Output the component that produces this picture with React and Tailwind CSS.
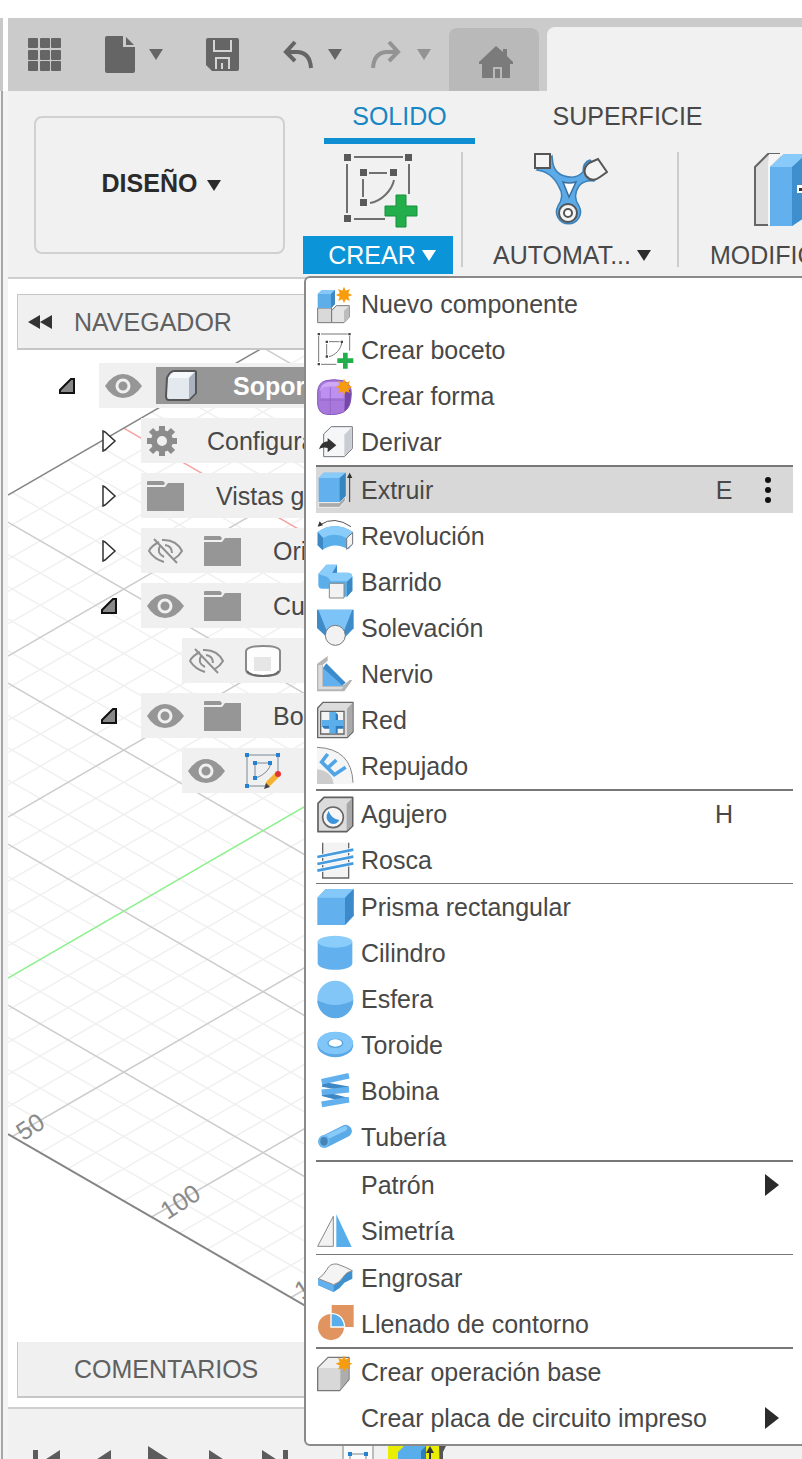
// src/App.jsx
import { useState } from 'react';

// Estrella naranja de los iconos "nuevo"
function Star({ cx, cy, r = 25 }) {
  const points = [];
  for (let i = 0; i < 16; i++) {
    const radius = i % 2 === 0 ? r : r * 0.55;
    const angle = (Math.PI / 8) * i;
    points.push(`${cx + radius * Math.sin(angle)},${cy - radius * Math.cos(angle)}`);
  }
  return <polygon points={points.join(' ')} fill="#f79c0c" />;
}

// Iconos del menu, todos en una caja de 108 x 108
const menuIcons = {
  componente: (
    <>
      <path d="M2 66h42v44H2z" fill="#d9d9d9" stroke="#777" strokeWidth="3" />
      <path d="M44 74l14-15h39v34l-16 17H44z" fill="#e4e4e4" stroke="#777" strokeWidth="3" strokeLinejoin="round" />
      <path d="M81 110V74l16-15v34z" fill="#bcbcbc" />
      <path d="M2 24l13-12h39v42L44 66H2z" fill="#5eaeea" />
      <path d="M2 24l13-12h39L42 24z" fill="#86c8f8" />
      <path d="M42 24l12-12v42L42 66z" fill="#3d87c4" />
      <Star cx={81} cy={27} />
    </>
  ),
  boceto: (
    <>
      <g stroke="#777" strokeWidth="3" fill="none">
        <path d="M12 6h80M5 12v78M98 12v44M12 97h46M36 29h32M29 36v32M74 33c-2 18-18 36-38 41" />
      </g>
      <g fill="#444">
        <path d="M2 3h7v7H2zM94 3h7v7h-7zM2 93h7v7H2zM26 26h7v7h-7zM71 26h7v7h-7zM26 70h7v7h-7z" />
      </g>
      <path d="M78 62h14v17h17v14H92v17H78V93H61V79h17z" fill="#22ae4b" />
    </>
  ),
  forma: (
    <>
      <path d="M2 40Q4 14 26 8Q50 2 78 8Q104 16 103 48Q102 88 80 102Q60 112 28 109Q4 106 2 78z" fill="#a878dd" />
      <path d="M84 44q14-14 18-6v30q-4 24-20 32z" fill="#7548a8" />
      <path d="M8 38Q14 16 34 12h38q-4 8-10 14H34Q16 26 10 38z" fill="#cfa8f6" />
      <path d="M12 34q10-8 22-8h36q8 0 10 10v24H12z" fill="#bd8ff0" />
      <path d="M40 28v78M6 66h74" stroke="#8f64c4" strokeWidth="2.5" fill="none" />
      <path d="M2 40Q4 14 26 8Q50 2 78 8Q104 16 103 48Q102 88 80 102Q60 112 28 109Q4 106 2 78z" fill="none" stroke="#8458bb" strokeWidth="3" />
      <Star cx={81} cy={27} />
    </>
  ),
  derivar: (
    <>
      <path d="M20 30L43 8h63v66L82 98H20z" fill="#f5f6f8" stroke="#70747a" strokeWidth="3" strokeLinejoin="round" />
      <path d="M82 32l22-22v64L82 96z" fill="#c9ccd2" />
      <path d="M6 76Q12 54 32 52V42l26 22-26 21V72Q16 68 6 76z" fill="#333" />
    </>
  ),
  extruir: (
    <>
      <path d="M5 92h62l18-18v12l-18 20H5z" fill="#aaa" stroke="#fff" strokeWidth="2" />
      <path d="M5 18L20 2h66v70L68 90H5z" fill="#62b1ee" />
      <path d="M5 18L20 2h66L68 18z" fill="#88caf9" />
      <path d="M68 18L86 2v70L68 90z" fill="#3684c0" />
      <path d="M98 90V12" stroke="#333" strokeWidth="3" />
      <path d="M98 2l8 16H90z" fill="#333" />
    </>
  ),
  revolucion: (
    <>
      <path d="M2 42Q52 6 108 42v36L94 94Q52 70 16 96L2 82z" fill="#5aaeea" />
      <path d="M2 42Q52 6 108 42L88 60Q52 40 18 60z" fill="#8accfa" />
      <path d="M2 42l16 18v36L2 82z" fill="#3b88c4" />
      <path d="M89 60l18-16v34L89 94z" fill="#f4f4f4" stroke="#777" strokeWidth="3" />
      <path d="M10 20Q52-8 102 26" fill="none" stroke="#555" strokeWidth="3" />
      <path d="M2 26l6-16 10 12z" fill="#333" />
    </>
  ),
  barrido: (
    <>
      <path d="M4 30L28 2h32v24h32q14 0 14 12v42L90 98H40V74H16Q4 74 4 62z" fill="#5aaeea" />
      <path d="M4 30L28 2h32L46 26h46q12 0 14 12L90 52H40Q36 38 22 36z" fill="#8accfa" />
      <path d="M90 54l16-16v42L90 98z" fill="#3b88c4" />
      <path d="M46 26L60 4v22z" fill="#3b88c4" />
      <path d="M37 58h44v44H37z" fill="#f2f2f2" stroke="#888" strokeWidth="3" />
    </>
  ),
  solevacion: (
    <>
      <path d="M0-1h110v56L82 84H32L0 54z" fill="#3e8bc9" />
      <path d="M4-1h102L82 60H28z" fill="#7cc4f8" />
      <circle cx="55" cy="76" r="30" fill="#f2f2f2" stroke="#777" strokeWidth="3" />
    </>
  ),
  nervio: (
    <>
      <path d="M0 24L32 0v14L18 26v62h62l18-16h8L82 106H0z" fill="#b5b5b5" />
      <path d="M16 26v66h64l-6 8H4V28z" fill="#dcdcdc" />
      <path d="M18 36l10-14 58 58-12 10H18z" fill="#3b8acb" />
      <path d="M18 36l60 54H18z" fill="#62b1ee" />
    </>
  ),
  red: (
    <>
      <path d="M2 18L18 1h90v88l-18 18H2z" fill="#dcdcdc" stroke="#666" strokeWidth="4" strokeLinejoin="round" />
      <path d="M90 20l16-17v86l-16 16z" fill="#aaa" />
      <path d="M11 28h70v68H11z" fill="#f3f3f3" stroke="#666" strokeWidth="4" />
      <path d="M37 30h18v24h24v18H55v22H37V72H14V54h23z" fill="#5aaeea" />
      <path d="M55 30l8 8v16H55zM14 72l8 8h15v-8zM55 72h24v8H62v14h-7z" fill="#2c7abd" />
    </>
  ),
  repujado: (
    <>
      <path d="M0-2Q82-2 108 82v26H50Q44 68 0 64z" fill="#f5f5f5" />
      <path d="M0 64q44 4 50 44H0z" fill="#ccc" />
      <path d="M0-2Q104 2 108 104" fill="none" stroke="#888" strokeWidth="3" />
      <path d="M32 18L14 42l38 38 34-22M32 60l26-24" fill="none" stroke="#4fa5e6" strokeWidth="11" />
    </>
  ),
  agujero: (
    <>
      <path d="M3 22L21 4h86v86l-18 17H3z" fill="#dcdcdc" stroke="#606060" strokeWidth="5" strokeLinejoin="round" />
      <path d="M89 24l16-17v82l-16 16z" fill="#a8a8a8" />
      <circle cx="48" cy="64" r="31" fill="#f6f6f6" stroke="#666" strokeWidth="5" />
      <path d="M35 45Q42 68 67 72Q58 88 40 82 20 68 35 45z" fill="#3c94dc" />
    </>
  ),
  rosca: (
    <>
      <path d="M17 2v106h78V2" fill="#f3f3f3" stroke="#666" strokeWidth="4" />
      <path d="M1 45L109 23M1 66l108-22M1 86l108-22" stroke="#fff" strokeWidth="13" />
      <path d="M1 45L109 23M1 66l108-22M1 86l108-22" stroke="#459bdf" strokeWidth="8" />
    </>
  ),
  prisma: (
    <>
      <path d="M1 26L26 0h84v80l-26 28H1z" fill="#62b1ee" />
      <path d="M1 26L26 0h84L84 26z" fill="#84c8f9" />
      <path d="M84 26L110 0v80l-26 28z" fill="#3c8ac9" />
    </>
  ),
  cilindro: (
    <>
      <path d="M2 20v66c8 24 98 24 104 0V20z" fill="#62b1ee" />
      <ellipse cx="54" cy="20" rx="52" ry="18" fill="#8accfa" />
    </>
  ),
  esfera: (
    <>
      <circle cx="55" cy="53" r="54" fill="#82c6f8" />
      <path d="M1 58Q55 86 109 58A54 54 0 0 1 1 58z" fill="#5ba9e6" />
    </>
  ),
  toroide: (
    <>
      <ellipse cx="55" cy="53" rx="54" ry="38" fill="#5aa9e6" />
      <ellipse cx="55" cy="48" rx="53" ry="34" fill="#80c6f8" />
      <ellipse cx="55" cy="49" rx="24" ry="14" fill="#58a4dd" />
      <ellipse cx="55" cy="48" rx="20" ry="11" fill="#fff" />
    </>
  ),
  bobina: (
    <>
      <path d="M16 34L94 48M16 62l78 20" stroke="#3d87c4" strokeWidth="15" />
      <path d="M14 26L96 8M14 58l82-8M14 94l82-14" stroke="#62b1ee" strokeWidth="17" />
    </>
  ),
  tuberia: (
    <>
      <path d="M22 68L86 36" stroke="#5aaae8" strokeWidth="37" strokeLinecap="round" />
      <path d="M26 56L84 28" stroke="#88caf9" strokeWidth="14" strokeLinecap="round" />
      <ellipse cx="21" cy="67" rx="17" ry="19" fill="#6cb8f0" />
      <ellipse cx="21" cy="67" rx="11" ry="13" fill="#4583b5" />
    </>
  ),
  simetria: (
    <>
      <path d="M49 10v90H2z" fill="#f2f2f2" stroke="#888" strokeWidth="3" />
      <path d="M58 4l46 98H58z" fill="#57aeea" />
    </>
  ),
  engrosar: (
    <>
      <path d="M4 56l46 20 20-14 16-24 20-6v24L82 68 68 84 50 96 4 76z" fill="#3d91d0" />
      <path d="M4 56v20l46 20V74z" fill="#62b1ee" />
      <path d="M4 56Q20 46 30 28 38 10 60 12q24 8 46 20Q88 36 78 52 66 70 50 74z" fill="#f4f4f4" stroke="#888" strokeWidth="3" />
    </>
  ),
  contorno: (
    <>
      <path d="M44-3h66v66H44z" fill="#e29460" />
      <circle cx="42" cy="63" r="39" fill="#e29460" />
      <path d="M42 22q38 2 41 41H42z" fill="#57aeea" stroke="#fff" strokeWidth="4" />
    </>
  ),
  base: (
    <>
      <path d="M2 42L34 10h62v66L68 110H2z" fill="#d8d8d8" stroke="#777" strokeWidth="4" strokeLinejoin="round" />
      <path d="M4 42L34 12h60L68 42z" fill="#efefef" />
      <path d="M70 42l24-28v62l-24 32z" fill="#adadad" />
      <Star cx={81} cy={29} />
    </>
  ),
};

// Grupos del menu CREAR; cada grupo va separado por una linea
const menuGroups = [
  {
    items: [
      { icon: 'componente', label: 'Nuevo componente' },
      { icon: 'boceto', label: 'Crear boceto' },
      { icon: 'forma', label: 'Crear forma' },
      { icon: 'derivar', label: 'Derivar' },
    ],
  },
  {
    thick: true,
    items: [
      { icon: 'extruir', label: 'Extruir', shortcut: 'E' },
      { icon: 'revolucion', label: 'Revolución' },
      { icon: 'barrido', label: 'Barrido' },
      { icon: 'solevacion', label: 'Solevación' },
      { icon: 'nervio', label: 'Nervio' },
      { icon: 'red', label: 'Red' },
      { icon: 'repujado', label: 'Repujado' },
    ],
  },
  {
    thick: true,
    items: [
      { icon: 'agujero', label: 'Agujero', shortcut: 'H' },
      { icon: 'rosca', label: 'Rosca' },
    ],
  },
  {
    items: [
      { icon: 'prisma', label: 'Prisma rectangular' },
      { icon: 'cilindro', label: 'Cilindro' },
      { icon: 'esfera', label: 'Esfera' },
      { icon: 'toroide', label: 'Toroide' },
      { icon: 'bobina', label: 'Bobina' },
      { icon: 'tuberia', label: 'Tubería' },
    ],
  },
  {
    thick: true,
    items: [
      { label: 'Patrón', submenu: true },
      { icon: 'simetria', label: 'Simetría' },
    ],
  },
  {
    items: [
      { icon: 'engrosar', label: 'Engrosar' },
      { icon: 'contorno', label: 'Llenado de contorno' },
    ],
  },
  {
    thick: true,
    items: [
      { icon: 'base', label: 'Crear operación base' },
      { label: 'Crear placa de circuito impreso', submenu: true },
    ],
  },
];

function Caret({ className = '' }) {
  return (
    <svg viewBox="0 0 14 11" className={`w-[14px] h-[11px] shrink-0 ${className}`} fill="currentColor">
      <path d="M0 0h14L7 11z" />
    </svg>
  );
}

function SketchIcon() {
  return (
    <svg viewBox="0 0 76 76" className="w-[76px] h-[76px]">
      <path d="M12 5h49M5 12v49M67 12v30M12 67h31M27 21h18M21 27v18M52 28c-2 10-12 21-24 23" stroke="#707070" strokeWidth="2" fill="none" />
      <path d="M2 2h7v7H2zM63 2h7v7h-7zM2 63h7v7H2zM18 17h7v7h-7zM48 17h7v7h-7zM18 47h7v7h-7z" fill="#5a5a5a" />
      <path d="M54 43h10v11h11v10H64v11H54V64H43V54h11z" fill="#22ae4b" stroke="#168f3a" strokeWidth="1" />
    </svg>
  );
}

function AutomateIcon() {
  return (
    <svg viewBox="0 0 76 76" className="w-[76px] h-[76px]">
      <path d="M5 18Q20 20 27 35Q33 44 26 54A12 12 0 1 0 47 54Q40 44 47 34Q52 28 62 29L70 20L58 8Q51 10 51 20Q45 26 38 25Q24 24 21 12L20 4z" fill="#5cabe8" stroke="#3c80b8" strokeWidth="1.5" />
      <path d="M31 30q6 2 13 0l-7 15z" fill="#fff" stroke="#3c6f9c" strokeWidth="1.5" />
      <path d="M3 2h15v14H3z" fill="#f4f4f4" stroke="#555" strokeWidth="2" />
      <path d="M57 11l9-4 9 13-7 5q-8 6-14-1-4-7 3-13z" fill="#f4f4f4" stroke="#555" strokeWidth="2" />
      <circle cx="36" cy="61" r="9" fill="#f4f4f4" stroke="#555" strokeWidth="2" />
      <circle cx="36" cy="61" r="4" fill="#fff" stroke="#555" strokeWidth="2" />
    </svg>
  );
}

function PressPullIcon() {
  return (
    <svg viewBox="0 0 76 76" className="w-[76px] h-[76px] shrink-0">
      <path d="M1 14L15 2h12v72H1z" fill="#dedede" />
      <path d="M26 2H14L1 15v58h13" fill="none" stroke="#666" strokeWidth="2" />
      <path d="M15 2h13L16 15v58h-2V13z" fill="#f6f6f6" />
      <path d="M16 15L30 2h38v52L38 74H16z" fill="#62b1ee" />
      <path d="M16 15L30 2h38L38 15z" fill="#88caf9" />
      <path d="M38 15L52 2h16v52L38 74z" fill="#3f8ecd" />
      <path d="M43 33h20v8H43z" fill="#fff" />
      <path d="M45 36h18v3H45z" fill="#333" />
    </svg>
  );
}

function EyeIcon({ off }) {
  if (off) {
    return (
      <svg viewBox="0 0 37 28" className="w-[37px] h-7 shrink-0" fill="none" stroke="#909090" strokeWidth="2">
        <path d="M12 5Q4 9 2 14q5 8 15 11M15 3q14-1 20 11-3 5-8 8M13 9q-4 7 4 11M18 8q7 1 7 8M7 2l23 24" />
      </svg>
    );
  }
  return (
    <svg viewBox="0 0 37 28" className="w-[37px] h-7 shrink-0">
      <path d="M0 14Q8 2 18 2t19 12Q29 26 18 26T0 14z" fill="#969696" />
      <circle cx="18" cy="14" r="6" fill="#969696" stroke="#f0f0f0" strokeWidth="3" />
    </svg>
  );
}

function FolderIcon() {
  return (
    <svg viewBox="0 0 37 30" className="w-[37px] h-[30px] shrink-0" fill="#969696">
      <path d="M0 1q0-1 1-1h15l2 2-1 2H0zM0 6h18l3-4h16v28H0z" />
    </svg>
  );
}

function GearIcon() {
  return (
    <svg viewBox="0 0 30 30" className="w-[30px] h-[30px] shrink-0" fill="none" stroke="#8c8c8c">
      <circle cx="15" cy="15" r="8" strokeWidth="6" />
      <path d="M15 0v5M15 25v5M0 15h5M25 15h5M4 4l4 4M22 22l4 4M26 4l-4 4M8 22l-4 4" strokeWidth="6" />
    </svg>
  );
}

function BodyIcon() {
  return (
    <svg viewBox="0 0 36 32" className="w-9 h-8 shrink-0">
      <path d="M1 6Q2 1 18 1t17 5v19q-1 6-17 6T1 25z" fill="#fdfdfd" stroke="#8a8a8a" strokeWidth="2" />
      <path d="M9 12h17v14H9z" fill="#e6e6e6" />
      <path d="M2 26q4 5 16 5t16-5" fill="none" stroke="#666" strokeWidth="2" />
    </svg>
  );
}

function CubeIcon() {
  return (
    <svg viewBox="0 0 32 32" className="w-8 h-8 shrink-0">
      <path d="M2 8Q5 1 9 1h21q1 0 1 2v20l-7 7H4q-3 0-3-4z" fill="#e4e8ef" stroke="#555" strokeWidth="2" />
      <path d="M24 8l6-6v21l-6 6z" fill="#aab2bf" />
      <path d="M3 8l6-6h20l-6 6z" fill="#f6f8fb" />
    </svg>
  );
}

function SketchEditIcon() {
  return (
    <svg viewBox="0 0 37 37" className="w-[37px] h-[37px] shrink-0">
      <path d="M2 3h31M2 3v31M33 3v18M2 34h20M10 11h15M10 11v14M26 11q-2 10-15 15" fill="none" stroke="#7a8794" />
      <path d="M0 1h4v4H0zM31 1h4v4h-4zM0 32h4v4H0zM8 9h4v4H8zM23 9h4v4h-4zM8 24h4v4H8z" fill="#2482d0" />
      <path d="M21 30l9-9 4 4-9 9-5 2z" fill="#f5b130" />
      <circle cx="33" cy="22" r="3" fill="#e23434" />
      <path d="M19 37l2-6 4 4z" fill="#444" />
    </svg>
  );
}

function Expander({ open }) {
  if (open) {
    return (
      <svg viewBox="0 0 16 16" className="w-4 h-4">
        <path d="M1 12L12 1h3v14H1z" fill="#888" stroke="#111" strokeWidth="2" />
      </svg>
    );
  }
  return (
    <svg viewBox="0 0 16 22" className="w-4 h-[22px]">
      <path d="M2 1v20l2-1 10-9L4 2z" fill="#fff" stroke="#333" strokeWidth="1.5" />
    </svg>
  );
}

const levelWidth = ['w-[91px]', 'w-[133px]', 'w-[174px]'];

function TreeRow({ level, open, children }) {
  return (
    <li className="flex h-[45px]">
      <div className={`${levelWidth[level]} pr-6 shrink-0 flex items-center justify-end`}>
        {open !== undefined && (
          <button type="button" aria-label={open ? 'Contraer' : 'Expandir'}>
            <Expander open={open} />
          </button>
        )}
      </div>
      <div className="flex-1 min-w-0 flex items-center bg-[#f0f0f0] pl-[6px] overflow-hidden whitespace-nowrap">{children}</div>
    </li>
  );
}

// Rejilla isometrica del lienzo
function Grid() {
  const width = 800;
  const slope = 0.578;
  const step = 32.2;
  const top = 216;
  const bottom = 855;
  const minor = '#f0f0f0';
  const major = '#cccccc';
  const lines = [];

  for (let k = 1; k < 40; k++) {
    const up = top + step * k;
    const down = bottom - step * k;
    const upStart = Math.max(0, (up - bottom) / (2 * slope));
    const downStart = Math.max(0, (top - down) / (2 * slope));
    const upColor = k % 5 === 0 ? major : minor;
    const downColor = k % 5 === 4 ? major : minor;
    lines.push({ x: upStart, y: up - slope * upStart, y2: up - slope * width, color: k === 15 ? '#8cf08c' : upColor });
    lines.push({ x: downStart, y: down + slope * downStart, y2: down + slope * width, color: k === 24 ? '#f5a3a0' : downColor });
  }
  // Los ejes y las lineas principales se pintan al final
  lines.sort((a, b) => (a.color === minor ? 0 : 1) - (b.color === minor ? 0 : 1));

  return (
    <svg className="absolute inset-0 w-full h-full" aria-hidden="true">
      {lines.map((l, i) => (
        <line key={i} x1={l.x} y1={l.y} x2={width} y2={l.y2} stroke={l.color} strokeWidth="1.5" />
      ))}
      <line x1="0" y1={top} x2={width} y2={top - slope * width} stroke="#858585" strokeWidth="1.5" />
      <line x1="0" y1={bottom} x2={width} y2={bottom + slope * width} stroke="#858585" strokeWidth="2" />
      <g fill="#8a8a8a" fontSize="25" textAnchor="middle">
        <text transform="translate(27 855) rotate(-33)">50</text>
        <text transform="translate(177 930) rotate(-33)">100</text>
        <text transform="translate(311 1010) rotate(-33)">150</text>
      </g>
    </svg>
  );
}

function MenuItem({ item, active, onHover }) {
  return (
    <button
      type="button"
      role="menuitem"
      onMouseEnter={onHover}
      className={`flex items-center w-full h-[46px] text-left ${active ? 'bg-[#d8d8d8]' : ''}`}
    >
      <span className="w-9 h-9 shrink-0 ml-px mr-2">
        {item.icon && (
          <svg viewBox="0 0 108 108" className="w-9 h-9 overflow-visible">{menuIcons[item.icon]}</svg>
        )}
      </span>
      <span className="flex-1 whitespace-nowrap">{item.label}</span>
      <span className="w-5 text-center">{item.shortcut}</span>
      <span className="w-[59px] flex justify-center pl-2">
        {active && (
          <svg viewBox="0 0 8 28" className="w-2 h-7" fill="#111">
            <circle cx="4" cy="4" r="3" />
            <circle cx="4" cy="14" r="3" />
            <circle cx="4" cy="24" r="3" />
          </svg>
        )}
        {item.submenu && (
          <svg viewBox="0 0 14 22" className="w-[14px] h-[22px] ml-2" fill="#2b2b2b">
            <path d="M0 0l14 11L0 22z" />
          </svg>
        )}
      </span>
    </button>
  );
}

function CreateMenu() {
  const [active, setActive] = useState('Extruir');

  return (
    <div role="menu" className="absolute left-px top-[132px] z-20 w-[504px] bg-white border-2 border-[#8a8a8a] rounded-md pl-[10px] pr-[13px] py-[3px] text-[#484848]">
      {menuGroups.map((group, index) => (
        <div
          key={index}
          className={index === 0 ? '' : group.thick ? 'border-t-2 border-[#777]' : 'border-t border-[#777]'}
        >
          {group.items.map((item) => (
            <MenuItem key={item.label} item={item} active={item.label === active} onHover={() => setActive(item.label)} />
          ))}
        </div>
      ))}
    </div>
  );
}

function TopBar() {
  return (
    <header className="flex items-center h-[73px] bg-[#cbcbcb] text-[#656565] pl-5">
      <button type="button" aria-label="Panel de datos">
        <svg viewBox="0 0 33 33" className="w-[33px] h-[33px]" fill="currentColor">
          {[0, 12, 23].map((y) => [0, 12, 23].map((x) => (
            <rect key={`${x}-${y}`} x={x} y={y} width="10" height="10" rx="1" />
          )))}
        </svg>
      </button>
      <button type="button" aria-label="Archivo" className="flex items-center ml-11">
        <svg viewBox="0 0 30 37" className="w-[30px] h-[37px]" fill="currentColor">
          <path d="M2 0h16v11h12v24q0 2-2 2H2q-2 0-2-2V2q0-2 2-2zM21 1l8 8h-8z" />
        </svg>
        <Caret className="ml-[14px]" />
      </button>
      <button type="button" aria-label="Guardar" className="ml-[43px]">
        <svg viewBox="0 0 33 33" className="w-[33px] h-[33px]">
          <path d="M2 0h29q2 0 2 2v29q0 2-2 2H6l-6-6V2q0-2 2-2z" fill="currentColor" />
          <path d="M8 2v11h17V2M10 31V20h13v11M16 25v6" fill="none" stroke="#d4d4d4" strokeWidth="2" />
        </svg>
      </button>
      <button type="button" aria-label="Deshacer" className="flex items-center ml-11">
        <svg viewBox="0 0 30 30" className="w-[30px] h-[30px]" fill="none" stroke="currentColor" strokeWidth="4">
          <path d="M12 2L3 12l9 9M3 12h12q12 1 13 16" />
        </svg>
        <Caret className="ml-[15px]" />
      </button>
      <button type="button" aria-label="Rehacer" className="flex items-center ml-[29px] text-[#939393]">
        <svg viewBox="0 0 30 30" className="w-[30px] h-[30px]" fill="none" stroke="currentColor" strokeWidth="4">
          <path d="M18 2l9 10-9 9M27 12H15Q3 13 2 28" />
        </svg>
        <Caret className="ml-4" />
      </button>
      <button type="button" aria-label="Inicio" className="ml-[18px] w-[90px] h-[63px] self-end rounded-t-lg bg-[#b9b9b9] text-[#7b7b7b] flex items-center justify-center pl-1 pt-1">
        <svg viewBox="0 0 34 32" className="w-[34px] h-8" fill="currentColor">
          <path d="M17 0l7 6V3h4v7l6 6v2h-3v14h-8V21h-9v11H3V18H0v-2z" />
          <path d="M16 23h5v9h-5z" />
        </svg>
      </button>
      <div className="ml-2 flex-1 h-16 self-end rounded-tl-lg bg-[#f1f1f1]" />
    </header>
  );
}

function Toolbar() {
  return (
    <div className="flex bg-[#f1f1f1] border-b-2 border-[#cfcfcf] h-[188px]">
      <div className="w-[295px] shrink-0 pt-[25px] pl-[26px]">
        <button type="button" className="w-[251px] h-[138px] pl-1 pb-1 border-2 border-[#d0d0d0] rounded-lg font-bold text-[#2b2b2b] flex items-center justify-center gap-[10px]">
          DISEÑO
          <Caret className="mt-1" />
        </button>
      </div>
      <div className="flex-1 min-w-0">
        <nav className="flex h-[53px] pl-[21px]">
          <button type="button" className="w-[151px] pt-[2px] border-b-[6px] border-[#0f8fd2] text-[#1687c4]">SOLIDO</button>
          <button type="button" className="ml-[76px] w-[153px] pt-[2px] border-b-[6px] border-transparent">SUPERFICIE</button>
        </nav>
        <div className="relative flex">
          <div className="w-[150px] shrink-0 pt-2 flex flex-col items-center">
            <div className="pl-1">
              <SketchIcon />
            </div>
            <button type="button" aria-haspopup="menu" className="mt-2 w-full h-[38px] bg-[#0b94d8] text-white flex items-center justify-center gap-[6px] pl-2">
              CREAR
              <Caret />
            </button>
          </div>
          <div className="ml-2 mt-2 w-[2px] h-[115px] shrink-0 bg-[#cdcdcd]" />
          <div className="w-[214px] shrink-0 pt-2 flex flex-col items-center">
            <AutomateIcon />
            <button type="button" className="mt-2 h-[38px] flex items-center justify-center gap-[6px] pl-1">
              AUTOMAT...
              <Caret className="text-[#2b2b2b]" />
            </button>
          </div>
          <div className="mt-2 w-[2px] h-[115px] shrink-0 bg-[#cdcdcd]" />
          <div className="flex-1 min-w-0 pt-2 pl-[31px] overflow-hidden">
            <div className="pl-11 flex">
              <PressPullIcon />
            </div>
            <button type="button" className="mt-2 h-[38px] whitespace-nowrap">MODIFIC</button>
          </div>
          <CreateMenu />
        </div>
      </div>
    </div>
  );
}

function Browser() {
  return (
    <aside className="relative w-[310px] pt-[15px]">
      <div className="ml-[9px] h-14 flex items-center bg-[#f0f0f0] border border-b-2 border-[#c6c6c6] text-[#606060]">
        <button type="button" aria-label="Ocultar navegador" className="ml-[10px] mr-[22px] text-[#333]">
          <svg viewBox="0 0 24 14" className="w-6 h-[14px]" fill="currentColor">
            <path d="M12 0v14L0 7zM24 0v14L12 7z" />
          </svg>
        </button>
        NAVEGADOR
      </div>
      <ul className="mt-[13px] flex flex-col gap-[10px]">
        <TreeRow level={0} open>
          <EyeIcon />
          <div className="ml-[14px] flex-1 h-[37px] flex items-center bg-[#969696] pl-[9px] font-bold text-white">
            <CubeIcon />
            <span className="ml-9">Sopor</span>
          </div>
        </TreeRow>
        <TreeRow level={1} open={false}>
          <GearIcon />
          <span className="ml-[30px]">Configura</span>
        </TreeRow>
        <TreeRow level={1} open={false}>
          <FolderIcon />
          <span className="ml-8">Vistas g</span>
        </TreeRow>
        <TreeRow level={1} open={false}>
          <EyeIcon off />
          <span className="ml-5"><FolderIcon /></span>
          <span className="ml-8">Ori</span>
        </TreeRow>
        <TreeRow level={1} open>
          <EyeIcon />
          <span className="ml-5"><FolderIcon /></span>
          <span className="ml-8">Cu</span>
        </TreeRow>
        <TreeRow level={2}>
          <EyeIcon off />
          <span className="ml-5"><BodyIcon /></span>
        </TreeRow>
        <TreeRow level={1} open>
          <EyeIcon />
          <span className="ml-5"><FolderIcon /></span>
          <span className="ml-8">Bo</span>
        </TreeRow>
        <TreeRow level={2}>
          <EyeIcon />
          <span className="ml-5"><SketchEditIcon /></span>
        </TreeRow>
      </ul>
    </aside>
  );
}

function Timeline() {
  return (
    <footer className="flex items-start h-[52px] overflow-hidden bg-[#f1f1f1] border-t-2 border-[#cfcfcf] pt-[37px] pl-[25px] text-[#5c5c5c]">
      <button type="button" aria-label="Ir al principio" className="mt-1 shrink-0">
        <svg viewBox="0 0 27 26" className="w-[27px] h-[26px]" fill="currentColor"><path d="M0 0h5v26H0zM27 0v26L7 13z" /></svg>
      </button>
      <button type="button" aria-label="Paso anterior" className="mt-1 ml-[31px] shrink-0">
        <svg viewBox="0 0 20 26" className="w-5 h-[26px]" fill="currentColor"><path d="M20 0v26L0 13z" /></svg>
      </button>
      <button type="button" aria-label="Reproducir" className="ml-[37px] shrink-0">
        <svg viewBox="0 0 28 36" className="w-7 h-9" fill="currentColor"><path d="M0 0v36l28-18z" /></svg>
      </button>
      <button type="button" aria-label="Paso siguiente" className="mt-1 ml-[33px] shrink-0">
        <svg viewBox="0 0 20 26" className="w-5 h-[26px]" fill="currentColor"><path d="M0 0v26l20-13z" /></svg>
      </button>
      <button type="button" aria-label="Ir al final" className="mt-1 ml-[33px] shrink-0">
        <svg viewBox="0 0 26 26" className="w-[26px] h-[26px]" fill="currentColor"><path d="M0 0v26l20-13zM21 0h5v26h-5z" /></svg>
      </button>
      <button type="button" aria-label="Boceto 1" className="ml-[54px] shrink-0">
        <svg viewBox="0 0 32 32" className="w-8 h-8">
          <path d="M1 0v32h30V0" fill="#fafafa" stroke="#bbb" strokeWidth="2" />
          <path d="M8 8h16v16H8z" fill="none" stroke="#7a8794" />
          <path d="M6 6h4v4H6zM22 6h4v4h-4z" fill="#2482d0" />
        </svg>
      </button>
      <button type="button" aria-label="Extrusión 1" className="ml-[14px] shrink-0">
        <svg viewBox="0 0 58 32" className="w-[58px] h-8">
          <path d="M0 0h54v32H0z" fill="#e9ee00" />
          <path d="M10 6l6-6h22v32H10z" fill="#57aeea" />
          <path d="M33 5l5-5v32h-5z" fill="#2f7db8" />
          <path d="M42 32V6" stroke="#333" strokeWidth="2" />
          <path d="M42 0l4 7h-8z" fill="#333" />
          <path d="M51 0h7l-3 6v26h-3z" fill="#555" />
        </svg>
      </button>
    </footer>
  );
}

function App() {
  return (
    <div className="min-h-screen flex pt-[18px] overflow-hidden bg-white text-[25px] leading-8 text-[#484848] font-['Liberation_Sans',Arial,sans-serif]">
      {/* Borde izquierdo de la ventana */}
      <div className="w-2 shrink-0 flex flex-col">
        <div className="w-[3px] h-[73px] bg-[#c9c9c9]" />
        <div className="flex-1 bg-[#f3f3f3] flex">
          <div className="w-[3px] border-r-2 border-[#a6a6a6]" />
        </div>
      </div>
      <div className="flex-1 min-w-0 flex flex-col">
        <TopBar />
        <Toolbar />
        <main className="relative flex-1 flex flex-col justify-between">
          <Grid />
          <Browser />
          <button type="button" className="relative ml-[9px] mb-[9px] w-[300px] h-14 pl-14 text-left bg-[#f0f0f0] border-l border-b-2 border-[#c6c6c6] text-[#606060]">
            COMENTARIOS
          </button>
        </main>
        <Timeline />
      </div>
    </div>
  );
}

export default App;
